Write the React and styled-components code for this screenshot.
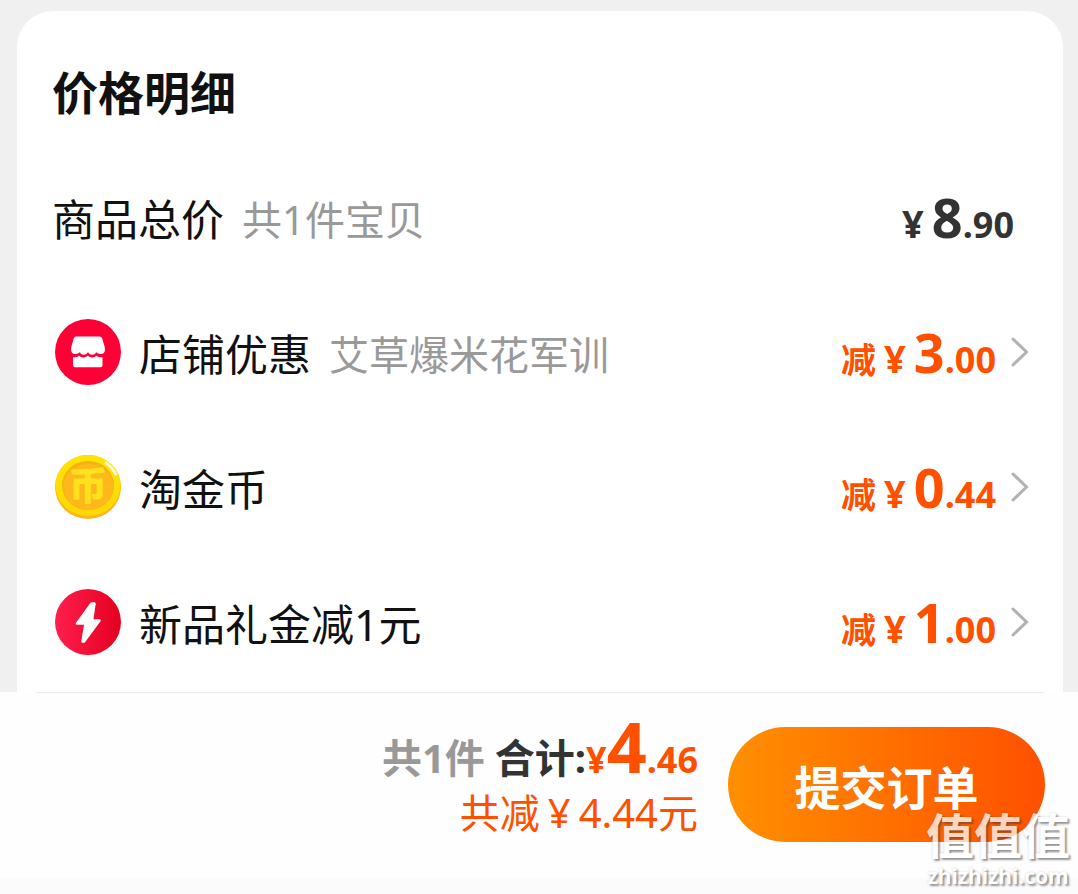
import React from 'react';
import styled, { createGlobalStyle, css } from 'styled-components';

const colors = {
  text: '#111111',
  dark: '#333333',
  muted: '#999999',
  accent: '#ff5000',
  page: '#f0f0f0',
};

const discounts = [
  { id: 'shop', Icon: ShopIcon, label: '店铺优惠', note: '艾草爆米花军训', whole: '3', cents: '.00' },
  { id: 'coin', Icon: CoinIcon, label: '淘金币', whole: '0', cents: '.44' },
  { id: 'gift', Icon: FlashIcon, label: '新品礼金减1元', whole: '1', cents: '.00' },
];

export default function App() {
  return (
    <>
      <GlobalStyle />
      <Details>
        <Card>
          <Title>价格明细</Title>
          <Row>
            <Label>商品总价</Label>
            <Note>共1件宝贝</Note>
            <Price $plain>
              <Yen>¥</Yen>
              <Whole>8</Whole>
              <Cents>.90</Cents>
            </Price>
          </Row>
          {discounts.map(({ id, Icon, label, note, whole, cents }) => (
            <RowButton key={id} type="button">
              <Icon />
              <Label>{label}</Label>
              {note && <Note>{note}</Note>}
              <Price>
                <Minus>减</Minus>
                <Yen>¥</Yen>
                <Whole>{whole}</Whole>
                <Cents>{cents}</Cents>
              </Price>
              <Chevron />
            </RowButton>
          ))}
        </Card>
      </Details>
      <Footer>
        <Summary>
          <TotalLine>
            <Count>共1件</Count>
            <TotalLabel>合计:</TotalLabel>
            <TotalYen>¥</TotalYen>
            <TotalWhole>4</TotalWhole>
            <Cents>.46</Cents>
          </TotalLine>
          <SavedLine>
            <span>共减</span>
            <span>¥</span>
            <span>4.44元</span>
          </SavedLine>
        </Summary>
        <SubmitButton type="button">提交订单</SubmitButton>
        <Watermark>
          <WatermarkName>值值值</WatermarkName>
          <WatermarkSite>zhizhizhi.com</WatermarkSite>
        </Watermark>
      </Footer>
      <BottomInset />
    </>
  );
}

function ShopIcon() {
  return (
    <Badge viewBox="0 0 66 66" aria-hidden="true">
      <circle cx="33" cy="33" r="33" fill="#ff0036" />
      <path
        fill="#fff"
        d="M21 17.500h23.500q2 0 2.700 2l2.400 8q1 4.300-.6 6.200-1.600 1.700-4.100 1.300-2.200-.3-3.500-1.800-1.700 2.500-4.200 2.500-2.500 0-4.200-2.500-1.700 2.500-4.200 2.500-2.500 0-4.200-2.500-1.400 1.500-3.600 1.800-2.500.4-4-1.300-1.600-1.900-.6-6.200l2.300-8q.6-2 2.300-2z"
      />
      <path
        fill="#fff"
        d="M18 38.200q3.800.5 6-1.400 1.800 1.700 4.300 1.700t4.500-1.700q2 1.700 4.500 1.700t4.300-1.700q2.200 1.900 5.900 1.400v8q0 2.100-2 2.100H20q-2 0-2-2.100z"
      />
    </Badge>
  );
}

function CoinIcon() {
  return (
    <Badge viewBox="0 0 66 66" aria-hidden="true">
      <defs>
        <linearGradient id="coinRim" x1="0" y1="0" x2="0" y2="1">
          <stop offset="0" stopColor="#ffe400" />
          <stop offset="1" stopColor="#ffd800" />
        </linearGradient>
      </defs>
      <ellipse cx="33" cy="33" rx="33" ry="32" fill="#ffb41e" />
      <ellipse cx="33" cy="31.500" rx="32.500" ry="30.500" fill="url(#coinRim)" />
      <ellipse cx="33" cy="31.500" rx="26" ry="24.500" fill="#f5b313" />
      <ellipse cx="33.500" cy="33" rx="25" ry="23" fill="#ffb81c" />
      <path d="M51 9q7 5 9.500 11" fill="none" stroke="#fffbd0" strokeWidth="3" strokeLinecap="round" />
      <CoinText x="33" y="45" textAnchor="middle">
        币
      </CoinText>
    </Badge>
  );
}

function FlashIcon() {
  return (
    <Badge viewBox="0 0 66 66" aria-hidden="true">
      <defs>
        <linearGradient id="flashFill" x1="0" y1="0" x2="1" y2="0">
          <stop offset="0" stopColor="#ff1f4e" />
          <stop offset="1" stopColor="#e5001f" />
        </linearGradient>
      </defs>
      <circle cx="33" cy="33" r="33" fill="url(#flashFill)" />
      <path
        d="M36.500 14.500 22 34.500h8.500L27.500 52.500h1.500L44.500 31.500h-7.500L39.500 14.500z"
        fill="#fff"
        stroke="#fff"
        strokeWidth="2.500"
        strokeLinejoin="round"
      />
    </Badge>
  );
}

function Chevron() {
  return (
    <ChevronSvg viewBox="0 0 18 30" aria-hidden="true">
      <path d="M2 2 15.500 15 2 28" fill="none" stroke="#b2b2b2" strokeWidth="3" strokeLinecap="round" />
    </ChevronSvg>
  );
}

const GlobalStyle = createGlobalStyle`
  * {
    box-sizing: border-box;
  }
  body {
    margin: 0;
    background: #fbfbfb;
    font-family: 'Noto Sans', 'Noto Sans CJK SC', sans-serif;
    color: ${colors.text};
  }
  button {
    border: 0;
    padding: 0;
    font-family: inherit;
    color: inherit;
    cursor: pointer;
  }
`;

const Details = styled.main`
  padding: 11px 15px 0 17px;
  background: ${colors.page};
`;

const Card = styled.section`
  padding: 46px 34px 0 35px;
  background: #fff;
  border-radius: 36px 36px 0 0;
`;

const Title = styled.h1`
  margin: 0;
  padding-bottom: 25px;
  font-size: 46px;
  line-height: 70px;
  font-weight: 700;
`;

const rowStyles = css`
  display: flex;
  align-items: center;
  width: 100%;
  height: 135px;
`;

const Row = styled.div`
  ${rowStyles}
`;

const RowButton = styled.button`
  ${rowStyles}
  background: none;
  text-align: left;
`;

const Badge = styled.svg`
  flex: none;
  width: 66px;
  height: 66px;
  margin: 0 18px 6px 3px;
`;

const CoinText = styled.text`
  font-size: 38px;
  font-weight: 700;
  fill: #ffe11c;
  stroke: #ffe11c;
  stroke-width: 1px;
  stroke-linejoin: round;
`;

const Label = styled.span`
  font-size: 43px;
  line-height: 60px;
`;

const Note = styled.span`
  margin-left: 18px;
  font-size: 40px;
  line-height: 60px;
  color: ${colors.muted};
`;

const Price = styled.span`
  display: flex;
  align-items: baseline;
  margin-left: auto;
  padding-top: 2px;
  padding-right: ${({ $plain }) => ($plain ? '15px' : '0')};
  font-weight: 700;
  line-height: 60px;
  color: ${({ $plain }) => ($plain ? colors.dark : colors.accent)};
`;

const Minus = styled.span`
  margin-right: 8px;
  font-size: 35px;
`;

const Yen = styled.span`
  margin-right: 8px;
  font-size: 38px;
`;

const Whole = styled.span`
  font-size: 54px;
`;

const Cents = styled.span`
  font-size: 36px;
`;

const ChevronSvg = styled.svg`
  flex: none;
  width: 18px;
  height: 30px;
  margin: 0 0 6px 15px;
`;

const Footer = styled.footer`
  position: relative;
  display: flex;
  justify-content: flex-end;
  align-items: flex-start;
  gap: 30px;
  padding: 35px 33px 36px;
  background: #fefefe;

  &::before {
    content: '';
    position: absolute;
    top: 0;
    left: 36px;
    right: 34px;
    height: 1px;
    background: #e8e8e8;
  }
`;

const Summary = styled.div`
  display: flex;
  flex-direction: column;
  align-items: flex-end;
  gap: 6px;
  color: ${colors.accent};
`;

const TotalLine = styled.div`
  display: flex;
  align-items: baseline;
  font-weight: 700;
  line-height: 38px;
`;

const Count = styled.span`
  margin-right: 10px;
  font-size: 40px;
  color: ${colors.muted};
`;

const TotalLabel = styled.span`
  font-size: 40px;
  color: ${colors.dark};
`;

const TotalYen = styled.span`
  font-size: 36px;
`;

const TotalWhole = styled.span`
  font-size: 70px;
`;

const SavedLine = styled.div`
  display: flex;
  gap: 8px;
  font-size: 40px;
  line-height: 56px;
`;

const SubmitButton = styled.button`
  width: 317px;
  height: 115px;
  border-radius: 58px;
  background: linear-gradient(90deg, #ff9000, ${colors.accent});
  && {
    color: #fff;
  }
  font-size: 46px;
  font-weight: 700;
`;

const Watermark = styled.div`
  position: absolute;
  right: 8px;
  bottom: -12px;
  display: flex;
  flex-direction: column;
  align-items: center;
  color: #fff;
  opacity: 0.75;
  text-shadow: 2px 2px 2px rgba(60, 60, 60, 0.7), 0 0 2px rgba(60, 60, 60, 0.3);
  font-weight: 700;
  pointer-events: none;
`;

const WatermarkName = styled.span`
  font-size: 48px;
  line-height: 52px;
`;

const WatermarkSite = styled.span`
  font-size: 21px;
  line-height: 28px;
`;

const BottomInset = styled.div`
  height: 16px;
`;
